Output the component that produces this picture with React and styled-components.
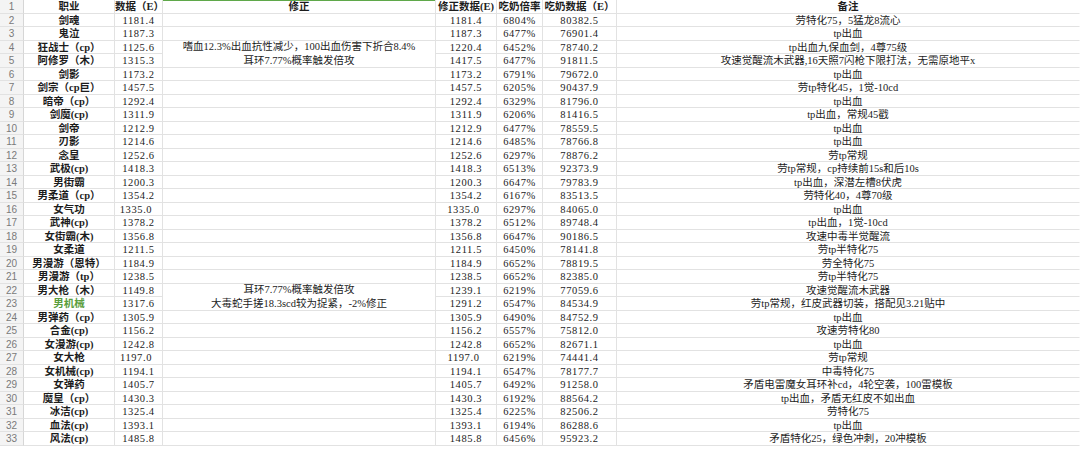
import React from 'react';
import styled, { createGlobalStyle } from 'styled-components';

const GlobalStyle = createGlobalStyle`
  html, body {
    margin: 0;
    padding: 0;
    background: #ffffff;
    overflow: hidden;
  }
`;

const Sheet = styled.div`
  display: grid;
  grid-template-columns: 24px 91px 48px 273px 61px 46px 74px 463px;
  grid-auto-rows: 13.5px;
  width: 1080px;
  font-family: "Liberation Serif", "Noto Sans CJK SC", serif;
  font-size: 10.5px;
  color: #1c1c1c;
`;

const RowNum = styled.div`
  box-sizing: border-box;
  background: #f4f4f4;
  border-right: 1px solid #d6d6d6;
  border-bottom: 1px solid #e2e2e2;
  color: #7a7a7a;
  font-family: "Liberation Sans", sans-serif;
  font-size: 10px;
  line-height: 13px;
  text-align: center;
`;

const Cell = styled.div`
  box-sizing: border-box;
  border-right: 1px solid ${(p) => (p.$last ? 'transparent' : '#e2e2e2')};
  border-bottom: 1px solid #e2e2e2;
  line-height: 13px;
  white-space: nowrap;
  text-align: center;
  font-weight: ${(p) => (p.$bold ? 700 : 400)};
  color: ${(p) => p.$color || '#1c1c1c'};
  letter-spacing: ${(p) => (p.$num ? '0.6px' : '0')};
  padding-right: ${(p) => (p.$shift ? '5px' : '0')};
  box-shadow: ${(p) => (p.$active ? 'inset 0 1px 0 #5fa84a' : 'none')};
`;

const Merged = styled(Cell)`
  grid-row: span 2;
  display: flex;
  flex-direction: column;
  justify-content: center;
  line-height: 13.5px;
`;

const headers = ['职业', '数据（E）', '修正', '修正数据(E)', '吃奶倍率', '吃奶数据（E）', '备注'];

const rows = [
  ['剑魂', '1181.4', '', '1181.4', '6804%', '80382.5', '劳特化75，5猛龙8流心'],
  ['鬼泣', '1187.3', '', '1187.3', '6477%', '76901.4', 'tp出血'],
  ['狂战士（cp）', '1125.6', ['嗜血12.3%出血抗性减少，100出血伤害下折合8.4%', '耳环7.77%概率触发倍攻'], '1220.4', '6452%', '78740.2', 'tp出血九保血剑，4尊75级'],
  ['阿修罗（木）', '1315.3', null, '1417.5', '6477%', '91811.5', '攻速觉醒流木武器,16天照7闪枪下限打法，无需原地平x'],
  ['剑影', '1173.2', '', '1173.2', '6791%', '79672.0', 'tp出血'],
  ['剑宗（cp巨）', '1457.5', '', '1457.5', '6205%', '90437.9', '劳tp特化45，1觉-10cd'],
  ['暗帝（cp）', '1292.4', '', '1292.4', '6329%', '81796.0', 'tp出血'],
  ['剑魔(cp)', '1311.9', '', '1311.9', '6206%', '81416.5', 'tp出血，常规45戳'],
  ['剑帝', '1212.9', '', '1212.9', '6477%', '78559.5', 'tp出血'],
  ['刃影', '1214.6', '', '1214.6', '6485%', '78766.8', 'tp出血'],
  ['念皇', '1252.6', '', '1252.6', '6297%', '78876.2', '劳tp常规'],
  ['武极(cp)', '1418.3', '', '1418.3', '6513%', '92373.9', '劳tp常规，cp持续前15s和后10s'],
  ['男街霸', '1200.3', '', '1200.3', '6647%', '79783.9', 'tp出血，深潜左槽8伏虎'],
  ['男柔道（cp）', '1354.2', '', '1354.2', '6167%', '83513.5', '劳特化40，4尊70级'],
  ['女气功', '1335.0', '', '1335.0', '6297%', '84065.0', 'tp出血', true],
  ['武神(cp)', '1378.2', '', '1378.2', '6512%', '89748.4', 'tp出血，1觉-10cd'],
  ['女街霸(木)', '1356.8', '', '1356.8', '6647%', '90186.5', '攻速中毒半觉醒流'],
  ['女柔道', '1211.5', '', '1211.5', '6450%', '78141.8', '劳tp半特化75'],
  ['男漫游（恩特）', '1184.9', '', '1184.9', '6652%', '78819.5', '劳全特化75'],
  ['男漫游（tp）', '1238.5', '', '1238.5', '6652%', '82385.0', '劳tp半特化75'],
  ['男大枪（木）', '1149.8', ['耳环7.77%概率触发倍攻', '大毒蛇手搓18.3scd较为捉紧，-2%修正'], '1239.1', '6219%', '77059.6', '攻速觉醒流木武器'],
  ['男机械', '1317.6', null, '1291.2', '6547%', '84534.9', '劳tp常规，红皮武器切装，搭配见3.21贴中'],
  ['男弹药（cp）', '1305.9', '', '1305.9', '6490%', '84752.9', 'tp出血'],
  ['合金(cp)', '1156.2', '', '1156.2', '6557%', '75812.0', '攻速劳特化80'],
  ['女漫游(cp)', '1242.8', '', '1242.8', '6652%', '82671.1', 'tp出血'],
  ['女大枪', '1197.0', '', '1197.0', '6219%', '74441.4', '劳tp常规', true],
  ['女机械(cp)', '1194.1', '', '1194.1', '6547%', '78177.7', '中毒特化75'],
  ['女弹药', '1405.7', '', '1405.7', '6492%', '91258.0', '矛盾电雷魔女耳环补cd，4轮空袭，100雷模板'],
  ['魔皇（cp）', '1430.3', '', '1430.3', '6192%', '88564.2', 'tp出血，矛盾无红皮不如出血'],
  ['冰洁(cp)', '1325.4', '', '1325.4', '6225%', '82506.2', '劳特化75'],
  ['血法(cp)', '1393.1', '', '1393.1', '6194%', '86288.6', 'tp出血'],
  ['风法(cp)', '1485.8', '', '1485.8', '6456%', '95923.2', '矛盾特化25，绿色冲刺，20冲模板'],
];

function Row({ index, data }) {
  const [job, value, fix, fixed, rate, milk, note, shift] = data;
  return (
    <>
      <RowNum>{index}</RowNum>
      <Cell $bold $color={job === '男机械' ? '#5a9e3c' : undefined}>{job}</Cell>
      <Cell $num $shift={shift}>{value}</Cell>
      {Array.isArray(fix) ? (
        <Merged>
          {fix.map((line) => (
            <span key={line}>{line}</span>
          ))}
        </Merged>
      ) : fix === null ? null : (
        <Cell />
      )}
      <Cell $num $shift={shift}>{fixed}</Cell>
      <Cell $num>{rate}</Cell>
      <Cell $num>{milk}</Cell>
      <Cell $last>{note}</Cell>
    </>
  );
}

export default function App() {
  return (
    <>
      <GlobalStyle />
      <Sheet>
        <RowNum>1</RowNum>
        {headers.map((h, i) => (
          <Cell key={h} $bold $active={i === 2} $last={i === headers.length - 1}>
            {h}
          </Cell>
        ))}
        {rows.map((r, i) => (
          <Row key={i} index={i + 2} data={r} />
        ))}
      </Sheet>
    </>
  );
}
